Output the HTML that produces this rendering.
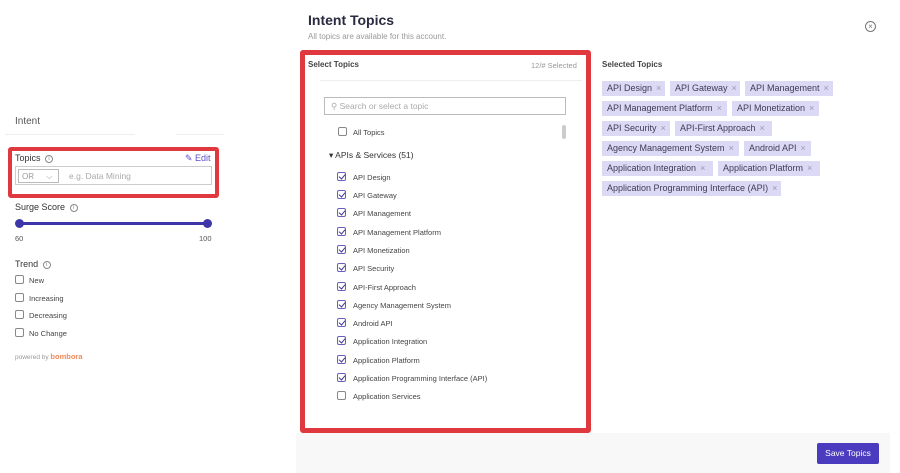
<!DOCTYPE html>
<html><head><meta charset="utf-8"><style>
*{box-sizing:border-box;margin:0;padding:0}
body{width:900px;height:473px;background:#fff;font-family:"Liberation Sans",sans-serif;position:relative;overflow:hidden;color:#333}
.a{position:absolute;white-space:nowrap}
.cb{position:absolute;width:9px;height:9px;border:1px solid #888;border-radius:2px;background:#fff}
.ck{border-color:#6a5fc0}
.ck::after{content:"";position:absolute;left:2px;top:0px;width:3px;height:5px;border:solid #3b3496;border-width:0 1.3px 1.3px 0;transform:rotate(40deg)}
.lb{position:absolute;font-size:7.5px;color:#444}
.tag{position:absolute;height:15px;background:#dcd9f5;font-size:9px;color:#3c3c55;line-height:15px;padding:0 5px;white-space:nowrap}
.tag span{color:#9a98b8;margin-left:4px}
.info{display:inline-block;width:8px;height:8px;border:1px solid #888;border-radius:50%;font-size:6px;line-height:6px;text-align:center;color:#888;vertical-align:1px;margin-left:2px}
</style></head><body>
<div class="a" style="left:15px;top:116px;font-size:10px;color:#555">Intent</div>
<div class="a" style="left:5px;top:134px;width:130px;height:1px;background:#eee"></div>
<div class="a" style="left:176px;top:134px;width:48px;height:1px;background:#eee"></div>
<div class="a" style="left:8px;top:147px;width:211px;height:51px;border:4px solid #e0383f;border-radius:3px"></div>
<div class="a" style="left:15px;top:153px;font-size:9px;color:#333">Topics <span class="info">i</span></div>
<div class="a" style="left:185px;top:153px;font-size:9px;color:#5a4fc8">✎ Edit</div>
<div class="a" style="left:15px;top:166px;width:197px;height:19px;border:1px solid #ccc"></div>
<div class="a" style="left:18px;top:169px;width:41px;height:14px;border:1px solid #bbb;font-size:8px;color:#999;padding:2px 3px">OR <span style="margin-left:10px">⌵</span></div>
<div class="a" style="left:69px;top:171px;font-size:8.5px;color:#aaa">e.g. Data Mining</div>
<div class="a" style="left:15px;top:202px;font-size:9px;color:#333">Surge Score <span class="info">i</span></div>
<div class="a" style="left:19px;top:222px;width:189px;height:3px;background:#3e36a8"></div>
<div class="a" style="left:15px;top:219px;width:9px;height:9px;border-radius:50%;background:#3e36a8"></div>
<div class="a" style="left:203px;top:219px;width:9px;height:9px;border-radius:50%;background:#3e36a8"></div>
<div class="a" style="left:15px;top:234px;font-size:7.5px;color:#555">60</div>
<div class="a" style="left:199px;top:234px;font-size:7.5px;color:#555">100</div>
<div class="a" style="left:15px;top:259px;font-size:9px;color:#333">Trend <span class="info">i</span></div>
<div class="cb" style="left:15px;top:275px"></div><div class="lb" style="left:29px;top:276px">New</div>
<div class="cb" style="left:15px;top:293px"></div><div class="lb" style="left:29px;top:294px">Increasing</div>
<div class="cb" style="left:15px;top:310px"></div><div class="lb" style="left:29px;top:311px">Decreasing</div>
<div class="cb" style="left:15px;top:328px"></div><div class="lb" style="left:29px;top:329px">No Change</div>
<div class="a" style="left:15px;top:352px;font-size:6.5px;color:#999">powered by <b style="color:#f08a5d;font-size:7.5px">bombora</b></div>

<div class="a" style="left:308px;top:12px;font-size:14px;font-weight:bold;color:#2a2a40">Intent Topics</div>
<div class="a" style="left:308px;top:32px;font-size:8px;color:#999">All topics are available for this account.</div>
<div class="a" style="left:865px;top:21px;width:11px;height:11px;border:1px solid #777;border-radius:50%;font-size:8px;line-height:9px;text-align:center;color:#777">×</div>

<div class="a" style="left:296px;top:433px;width:594px;height:40px;background:#f8f8f8"></div>
<div class="a" style="left:817px;top:443px;width:62px;height:21px;background:#4a3bbf;color:#fff;font-size:8.5px;text-align:center;line-height:21px;border-radius:2px">Save Topics</div>

<div class="a" style="left:300px;top:50px;width:291px;height:383px;border:5px solid #e0383f;border-radius:3px;background:#fff"></div>
<div class="a" style="left:308px;top:60px;font-size:8px;font-weight:bold;color:#444">Select Topics</div>
<div class="a" style="left:531px;top:61px;font-size:7.5px;color:#999">12/# Selected</div>
<div class="a" style="left:320px;top:80px;width:262px;height:1px;background:#eee"></div>
<div class="a" style="left:324px;top:97px;width:242px;height:18px;border:1px solid #bbb"></div>
<div class="a" style="left:331px;top:101px;font-size:8.5px;color:#aaa">⚲ Search or select a topic</div>
<div class="a" style="left:562px;top:125px;width:4px;height:14px;background:#ccc;border-radius:2px"></div>
<div class="cb" style="left:338px;top:127px"></div><div class="lb" style="left:353px;top:128px">All Topics</div>
<div class="a" style="left:329px;top:150px;font-size:8.5px;color:#333">▾ APIs &amp; Services (51)</div>
<div class="cb ck" style="left:337px;top:172px"></div><div class="lb" style="left:353px;top:173px">API Design</div>
<div class="cb ck" style="left:337px;top:190px"></div><div class="lb" style="left:353px;top:191px">API Gateway</div>
<div class="cb ck" style="left:337px;top:208px"></div><div class="lb" style="left:353px;top:209px">API Management</div>
<div class="cb ck" style="left:337px;top:227px"></div><div class="lb" style="left:353px;top:228px">API Management Platform</div>
<div class="cb ck" style="left:337px;top:245px"></div><div class="lb" style="left:353px;top:246px">API Monetization</div>
<div class="cb ck" style="left:337px;top:263px"></div><div class="lb" style="left:353px;top:264px">API Security</div>
<div class="cb ck" style="left:337px;top:282px"></div><div class="lb" style="left:353px;top:283px">API-First Approach</div>
<div class="cb ck" style="left:337px;top:300px"></div><div class="lb" style="left:353px;top:301px">Agency Management System</div>
<div class="cb ck" style="left:337px;top:318px"></div><div class="lb" style="left:353px;top:319px">Android API</div>
<div class="cb ck" style="left:337px;top:336px"></div><div class="lb" style="left:353px;top:337px">Application Integration</div>
<div class="cb ck" style="left:337px;top:355px"></div><div class="lb" style="left:353px;top:356px">Application Platform</div>
<div class="cb ck" style="left:337px;top:373px"></div><div class="lb" style="left:353px;top:374px">Application Programming Interface (API)</div>
<div class="cb" style="left:337px;top:391px"></div><div class="lb" style="left:353px;top:392px">Application Services</div>

<div class="a" style="left:602px;top:60px;font-size:8px;font-weight:bold;color:#444">Selected Topics</div>
<div class="tag" style="left:602px;top:81px;width:63px">API Design<span>×</span></div>
<div class="tag" style="left:670px;top:81px;width:70px">API Gateway<span>×</span></div>
<div class="tag" style="left:745px;top:81px;width:88px">API Management<span>×</span></div>
<div class="tag" style="left:602px;top:101px;width:125px">API Management Platform<span>×</span></div>
<div class="tag" style="left:732px;top:101px;width:87px">API Monetization<span>×</span></div>
<div class="tag" style="left:602px;top:121px;width:68px">API Security<span>×</span></div>
<div class="tag" style="left:675px;top:121px;width:97px">API-First Approach<span>×</span></div>
<div class="tag" style="left:602px;top:141px;width:137px">Agency Management System<span>×</span></div>
<div class="tag" style="left:744px;top:141px;width:67px">Android API<span>×</span></div>
<div class="tag" style="left:602px;top:161px;width:111px">Application Integration<span>×</span></div>
<div class="tag" style="left:718px;top:161px;width:102px">Application Platform<span>×</span></div>
<div class="tag" style="left:602px;top:181px;width:179px">Application Programming Interface (API)<span>×</span></div>
</body></html>
